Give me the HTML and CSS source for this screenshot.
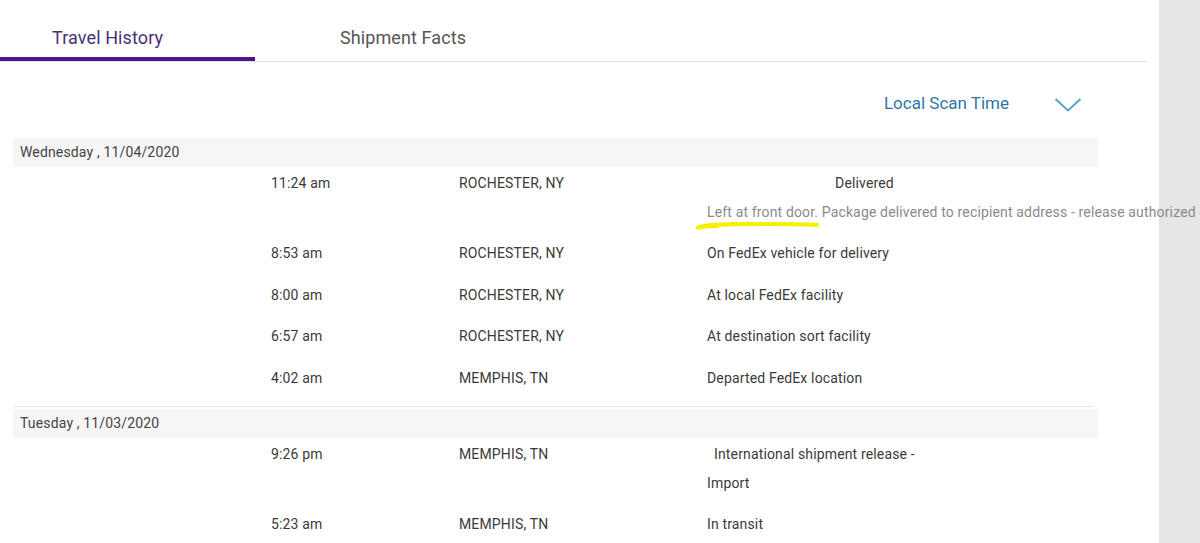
FILE: index.html
```html
<!DOCTYPE html>
<html lang="en">
<head>
<meta charset="utf-8">
<title>Travel History</title>
<link rel="stylesheet" href="styles.css">
</head>
<body>
<div class="page">
  <main class="main">
    <nav class="tabs">
      <div class="tab tab-active">Travel History</div>
      <div class="tab tab-second">Shipment Facts</div>
    </nav>
    <div class="sort">
      <span class="sort-label">Local Scan Time</span>
      <svg class="chevron" width="28" height="16" viewBox="0 0 28 16"><polyline points="1.5,2 14,13.5 26.5,2" fill="none" stroke="#5a9fc6" stroke-width="1.8"/></svg>
    </div>

    <section class="day day-first">
      <div class="day-head">Wednesday , 11/04/2020</div>
      <div class="row">
        <div class="c-time">11:24 am</div>
        <div class="c-loc">ROCHESTER, NY</div>
        <div class="c-desc">
          <div class="center">Delivered</div>
          <div class="note">Left at front door. Package delivered to recipient address - release authorized
            <svg class="mark" width="130" height="12" viewBox="0 0 130 12"><path d="M3,8.5 C10,6 20,5.5 40,5.2 C70,4.8 100,5 122,5.8" fill="none" stroke="#f4f000" stroke-width="4.2" stroke-linecap="round"/><path d="M3,9 C8,8 14,7.5 22,7.4" fill="none" stroke="#f4f000" stroke-width="3" stroke-linecap="round"/></svg>
          </div>
        </div>
      </div>
      <div class="row">
        <div class="c-time">8:53 am</div>
        <div class="c-loc">ROCHESTER, NY</div>
        <div class="c-desc">On FedEx vehicle for delivery</div>
      </div>
      <div class="row">
        <div class="c-time">8:00 am</div>
        <div class="c-loc">ROCHESTER, NY</div>
        <div class="c-desc">At local FedEx facility</div>
      </div>
      <div class="row">
        <div class="c-time">6:57 am</div>
        <div class="c-loc">ROCHESTER, NY</div>
        <div class="c-desc">At destination sort facility</div>
      </div>
      <div class="row">
        <div class="c-time">4:02 am</div>
        <div class="c-loc">MEMPHIS, TN</div>
        <div class="c-desc">Departed FedEx location</div>
      </div>
    </section>

    <section class="day">
      <div class="day-head">Tuesday , 11/03/2020</div>
      <div class="row">
        <div class="c-time">9:26 pm</div>
        <div class="c-loc">MEMPHIS, TN</div>
        <div class="c-desc">
          <div class="indent">International shipment release -</div>
          <div class="second">Import</div>
        </div>
      </div>
      <div class="row">
        <div class="c-time">5:23 am</div>
        <div class="c-loc">MEMPHIS, TN</div>
        <div class="c-desc">In transit</div>
      </div>
    </section>
  </main>
  <aside class="side"></aside>
</div>
</body>
</html>
```

FILE: styles.css
```css
* { box-sizing: border-box; }
html, body { margin: 0; padding: 0; }
body {
  background: #fff;
  font-family: Roboto, "Liberation Sans", Arial, sans-serif;
  color: #3a3a3a;
  width: 1200px;
  height: 543px;
  overflow: hidden;
}
.page {
  display: grid;
  grid-template-columns: 1159px 41px;
  height: 543px;
}
.side { background: #e6e6e6; }
.main { min-width: 0; }

.tabs {
  display: flex;
  width: 1147px;
  height: 62px;
  border-bottom: 1px solid #e2e2e2;
}
.tab {
  font-size: 18px;
  line-height: 22px;
  padding-top: 27px;
  height: 61px;
  letter-spacing: 0.1px;
}
.tab-active {
  width: 255px;
  padding-left: 52px;
  color: #4a2f78;
  border-bottom: 4px solid #4d148c;
}
.tab-second {
  padding-left: 85px;
  color: #555;
}

.sort {
  display: flex;
  justify-content: flex-end;
  align-items: center;
  height: 76px;
  padding-right: 77px;
  padding-top: 6px;
}
.sort-label {
  font-size: 17px;
  line-height: 24px;
  color: #2f76a6;
  margin-right: 45px;
}
.chevron { display: block; margin-top: 3px; }

.day-head {
  margin-left: 13px;
  width: 1085px;
  height: 29px;
  line-height: 29px;
  padding-left: 7px;
  background: #f6f6f6;
  font-size: 14px;
  color: #444;
  letter-spacing: 0.15px;
}
.day-first {
  padding-bottom: 2px;
}
.day-first::after {
  content: "";
  display: block;
  margin-top: 2px;
  margin-left: 13px;
  width: 1080px;
  border-top: 1px solid #e6e6e6;
}
.row {
  display: grid;
  grid-template-columns: 188px 248px 315px;
  padding: 5.5px 0 16.17px 271px;
  font-size: 14px;
  line-height: 20px;
  letter-spacing: 0.15px;
  color: #3a3a3a;
}
.c-desc { position: relative; }
.center { text-align: center; }
.note {
  position: relative;
  margin-top: 9px;
  white-space: nowrap;
  color: #8a8a8a;
}
.mark {
  position: absolute;
  left: -12px;
  top: 17px;
}
.indent { padding-left: 7px; }
.second { margin-top: 9px; }
```
